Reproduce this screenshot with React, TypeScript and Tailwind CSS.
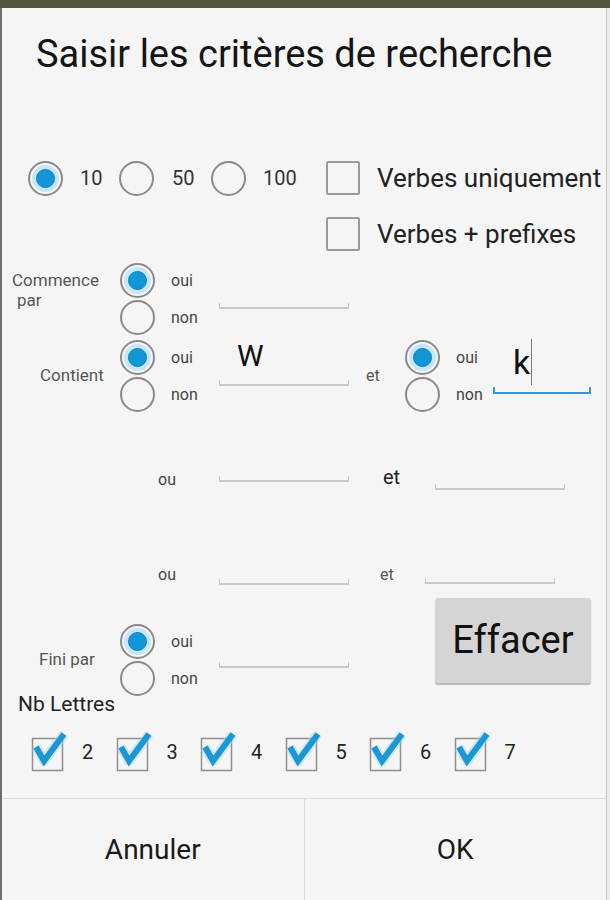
const Radio = ({ on }: { on?: boolean }) =>
  on ? (
    <div className="w-[35px] h-[35px] shrink-0 rounded-full border-2 border-[#8a8a8a] p-[2px]">
      <div className="w-full h-full rounded-full bg-[#c4e6f6] flex items-center justify-center">
        <div className="w-[19px] h-[19px] rounded-full bg-[#1396d6] border border-[#0a80bd]" />
      </div>
    </div>
  ) : (
    <div className="w-[35px] h-[35px] shrink-0 rounded-full border-2 border-[#8a8a8a]" />
  );

const RadioPair = ({ oui, width }: { oui: boolean; width: string }) => (
  <div className={`flex flex-col gap-[2px] shrink-0 ${width}`}>
    <div className="flex items-center">
      <Radio on={oui} />
      <span className="ml-[16px] text-[16px] text-[#444]">oui</span>
    </div>
    <div className="flex items-center">
      <Radio on={!oui} />
      <span className="ml-[16px] text-[16px] text-[#444]">non</span>
    </div>
  </div>
);

const Line = ({ className = "" }: { className?: string }) => (
  <div className={`h-[6px] w-[130px] shrink-0 border-x border-b-2 border-[#c9c9c9] ${className}`} />
);

const Checked = ({ n }: { n: number }) => (
  <div className="flex items-center w-[84.5px] shrink-0">
    <svg width="40" height="44" viewBox="0 0 40 44" className="shrink-0">
      <rect x="2.5" y="8.5" width="30" height="32" fill="none" stroke="#8f8f8f" strokeWidth="1.5" />
      <path
        d="M6 17 L14 31 L34 4"
        fill="none"
        stroke="#9fd6ef"
        strokeWidth="10"
        strokeOpacity="0.45"
        strokeLinejoin="round"
      />
      <path d="M6 17 L14 31 L34 4" fill="none" stroke="#1b97d3" strokeWidth="6" strokeLinejoin="miter" />
    </svg>
    <span className="ml-[12px] text-[20px] text-[#222]">{n}</span>
  </div>
);

export default function App() {
  return (
    <div className="w-[610px] h-[900px] flex flex-col bg-[#e6e6e6] font-[Roboto,'Liberation_Sans',sans-serif] overflow-hidden">
      <div className="h-[8px] bg-[#55553f] shrink-0" />
      <div className="flex-1 flex">
        <div className="w-[2px] bg-[#6e6e6e]" />
        <div className="w-[605px] bg-[#f5f5f5] border-r border-[#c4c4c4] flex flex-col">
          {/* title */}
          <div className="pt-[24px] pl-[34px] text-[38px] leading-[44px] text-[#151515] whitespace-nowrap">
            Saisir les critères de recherche
          </div>

          {/* 10 / 50 / 100 + verbes uniquement */}
          <div className="mt-[82px] h-[40px] flex items-center">
            <div className="ml-[26px]">
              <Radio on />
            </div>
            <span className="ml-[17px] w-[22px] text-[20px] text-[#333]">10</span>
            <div className="ml-[17px]">
              <Radio />
            </div>
            <span className="ml-[18px] w-[23px] text-[20px] text-[#333]">50</span>
            <div className="ml-[16px]">
              <Radio />
            </div>
            <span className="ml-[17px] w-[35px] text-[20px] text-[#333]">100</span>
            <div className="ml-[28px] w-[34px] h-[34px] shrink-0 border-2 border-[#9a9a9a] rounded-[2px]" />
            <span className="ml-[17px] text-[26px] text-[#222] whitespace-nowrap">Verbes uniquement</span>
          </div>

          {/* verbes + prefixes */}
          <div className="mt-[19px] h-[34px] flex items-center">
            <div className="ml-[324px] w-[34px] h-[34px] shrink-0 border-2 border-[#9a9a9a] rounded-[2px]" />
            <span className="ml-[17px] text-[26px] text-[#222] whitespace-nowrap">Verbes + prefixes</span>
          </div>

          {/* commence par */}
          <div className="mt-[12px] h-[72px] flex items-start">
            <div className="w-[118px] shrink-0 pl-[10px] pt-[7px] text-[17px] leading-[20px] text-[#555]">
              <div>Commence</div>
              <div className="pl-[5px]">par</div>
            </div>
            <RadioPair oui width="w-[99px]" />
            <Line className="mt-[40px]" />
          </div>

          {/* contient */}
          <div className="mt-[5px] h-[72px] flex items-stretch">
            <div className="w-[118px] shrink-0 pl-[38px] flex items-center text-[17px] text-[#555]">Contient</div>
            <RadioPair oui width="w-[99px]" />
            <div className="w-[130px] shrink-0 flex flex-col">
              <div className="h-[32px] leading-[32px] pl-[18px] text-[30px] text-[#111]">W</div>
              <Line className="mt-[8px]" />
            </div>
            <span className="ml-[17px] w-[39px] shrink-0 self-center text-[16px] text-[#555]">et</span>
            <RadioPair oui width="w-[88px]" />
            <div className="w-[98px] shrink-0 flex flex-col">
              <div className="h-[44px] pl-[20px] flex items-center text-[34px] text-[#111]">
                k<span className="ml-[1px] w-[1px] h-[46px] bg-[#777]" />
              </div>
              <div className="mt-[3px] h-[7px] w-[98px] border-x-2 border-b-2 border-[#2b9bd3]" />
            </div>
          </div>

          {/* ou ... et ... */}
          <div className="mt-[48px] h-[36px] flex items-start">
            <span className="ml-[156px] w-[61px] shrink-0 mt-[10px] leading-[20px] text-[16px] text-[#444]">ou</span>
            <Line className="mt-[16px]" />
            <span className="ml-[34px] w-[52px] shrink-0 mt-[5px] leading-[24px] text-[20px] text-[#222]">et</span>
            <Line className="mt-[24px]" />
          </div>

          <div className="mt-[64px] h-[26px] flex items-start">
            <span className="ml-[156px] w-[61px] shrink-0 mt-[5px] leading-[20px] text-[16px] text-[#444]">ou</span>
            <Line className="mt-[19px]" />
            <span className="ml-[31px] w-[45px] shrink-0 mt-[5px] leading-[20px] text-[16px] text-[#555]">et</span>
            <Line className="mt-[18px]" />
          </div>

          {/* fini par + effacer */}
          <div className="mt-[12px] h-[98px] flex items-start">
            <div className="w-[118px] shrink-0 pl-[37px] mt-[51px] leading-[20px] text-[17px] text-[#555]">Fini par</div>
            <div className="mt-[26px]">
              <RadioPair oui width="w-[99px]" />
            </div>
            <Line className="mt-[64px]" />
            <button className="ml-[86px] w-[156px] h-[85px] shrink-0 rounded-[3px] bg-[#d5d5d5] shadow-[0_2px_1px_rgba(0,0,0,0.25)] text-[38px] text-[#111]">
              Effacer
            </button>
          </div>

          {/* nb lettres */}
          <div className="-mt-[4px] h-[24px] pl-[16px] leading-[24px] text-[21px] text-[#222]">Nb Lettres</div>

          <div className="mt-[14px] h-[44px] flex items-center pl-[28px]">
            {[2, 3, 4, 5, 6, 7].map((n) => (
              <Checked key={n} n={n} />
            ))}
          </div>

          {/* buttons */}
          <div className="mt-auto h-[102px] border-t border-[#dadada] flex">
            <button className="flex-1 text-[28px] text-[#1a1a1a]">Annuler</button>
            <button className="flex-1 border-l border-[#dadada] text-[28px] text-[#1a1a1a]">OK</button>
          </div>
        </div>
        <div className="flex-1 bg-[#ececec]" />
      </div>
    </div>
  );
}
